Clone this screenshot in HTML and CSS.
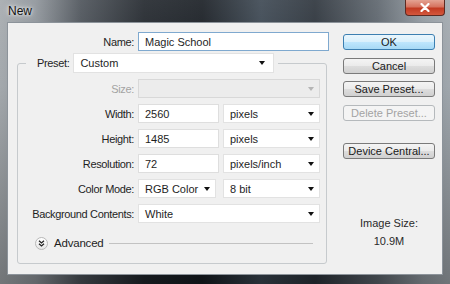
FILE: index.html
```html
<!DOCTYPE html>
<html lang="en">
<head>
    <meta charset="UTF-8">
    <title>New</title>
    <link rel="stylesheet" href="styles.css">
</head>
<body>
    <div class="window">
        <div class="titlebar">
            <span class="title">New</span>
            <span class="close">
                <svg width="10" height="9" viewBox="0 0 10 9"><path d="M1.5 1 L8.5 8 M8.5 1 L1.5 8" stroke="#fff" stroke-width="2.2" stroke-linecap="round"/></svg>
            </span>
        </div>

        <div class="client">
            <!-- Champs du document -->
            <div class="main">
                <div class="name-row">
                    <span class="label">Name:</span>
                    <div class="field focus">Magic School</div>
                </div>

                <fieldset class="group">
                    <legend class="preset">
                        <span class="label">Preset:</span>
                        <div class="select preset-select">Custom</div>
                    </legend>

                    <div class="rows">
                        <span class="label disabled">Size:</span>
                        <div class="select span2 disabled"></div>

                        <span class="label">Width:</span>
                        <div class="field">2560</div>
                        <div class="select">pixels</div>

                        <span class="label">Height:</span>
                        <div class="field">1485</div>
                        <div class="select">pixels</div>

                        <span class="label">Resolution:</span>
                        <div class="field">72</div>
                        <div class="select">pixels/inch</div>

                        <span class="label">Color Mode:</span>
                        <div class="select mode">RGB Color</div>
                        <div class="select">8 bit</div>

                        <span class="label">Background Contents:</span>
                        <div class="select span2">White</div>
                    </div>

                    <div class="advanced">
                        <span class="adv-icon">
                            <svg width="7" height="7" viewBox="0 0 7 7"><path d="M1 0.8 L3.5 3 L6 0.8 M1 3.8 L3.5 6 L6 3.8" fill="none" stroke="#222" stroke-width="1.3"/></svg>
                        </span>
                        <span class="adv-text">Advanced</span>
                        <span class="adv-line"></span>
                    </div>
                </fieldset>
            </div>

            <!-- Boutons -->
            <div class="actions">
                <button class="btn default">OK</button>
                <button class="btn">Cancel</button>
                <button class="btn">Save Preset...</button>
                <button class="btn" disabled>Delete Preset...</button>
                <button class="btn device">Device Central...</button>
                <div class="image-size">
                    <span>Image Size:</span>
                    <span>10.9M</span>
                </div>
            </div>
        </div>
    </div>
</body>
</html>
```

FILE: styles.css
```css
* {
    margin: 0;
    padding: 0;
    box-sizing: border-box;
}

body {
    width: 450px;
    height: 284px;
    overflow: hidden;
    font-family: "Liberation Sans", Arial, sans-serif;
    font-size: 11px;
    color: #1e1e1e;
}

.window {
    height: 284px;
    display: flex;
    flex-direction: column;
    background:
        linear-gradient(180deg, rgba(255, 255, 255, 0.1) 0%, rgba(0, 0, 0, 0) 30%, rgba(0, 0, 0, 0.3) 100%),
        linear-gradient(90deg, #a4a9ad 0%, #8c9298 8%, #4a5057 18%, #1f242a 32%, #161b21 45%, #3a4550 58%, #2a3139 70%, #5b636b 84%, #8f979e 94%, #a0a7ad 100%);
}

.titlebar {
    height: 22px;
    display: flex;
    align-items: flex-start;
    padding-left: 8px;
}

.title {
    margin-top: 4px;
    font-size: 12px;
    color: #111;
    text-shadow: 0 0 6px rgba(255, 255, 255, 0.9), 0 0 3px rgba(255, 255, 255, 0.9);
}

.close {
    margin-left: auto;
    margin-right: 5px;
    width: 40px;
    height: 16px;
    display: flex;
    align-items: center;
    justify-content: center;
    border: 1px solid #5d2a22;
    border-top: none;
    border-radius: 0 0 4px 4px;
    background: linear-gradient(180deg, #e4a393 0%, #d6735f 45%, #c23a22 55%, #d4583d 100%);
}

.client {
    flex: 1;
    margin: 0 7px 9px 7px;
    border: 1px solid #8c939a;
    background-color: #f0f0f0;
    display: flex;
}

.main {
    width: 327px;
}

.label {
    text-align: right;
    white-space: nowrap;
    letter-spacing: -0.35px;
}

.disabled {
    color: #a3a3a3;
}

.name-row {
    margin-top: 9px;
    display: flex;
    align-items: center;
}

.name-row .label {
    width: 126px;
    margin-right: 4px;
}

.field {
    height: 19px;
    padding: 0 6px;
    display: flex;
    align-items: center;
    background-color: #fff;
    border: 1px solid #dedede;
}

.name-row .field {
    width: 191px;
}

.field.focus {
    border-color: #7fa9cf;
}

.select {
    position: relative;
    height: 19px;
    padding: 0 6px;
    display: flex;
    align-items: center;
    background-color: #fff;
    border: 1px solid #e2e2e2;
}

.select::after {
    content: "";
    position: absolute;
    right: 5px;
    top: 7px;
    border-left: 3.5px solid transparent;
    border-right: 3.5px solid transparent;
    border-top: 4px solid #111;
}

.select.disabled {
    background-color: #ececec;
    border-color: #d8d8d8;
}

.select.disabled::after {
    border-top-color: #b5b5b5;
}

.group {
    margin: 2px 0 0 9px;
    width: 310px;
    min-width: 0;
    padding: 0 0 13px 0;
    border: 1px solid #c6cacd;
    border-radius: 3px;
}

.preset {
    margin-left: 8px;
    padding: 0 4px 0 11px;
    display: flex;
    align-items: center;
}

.preset .label {
    margin-right: 4px;
}

.preset-select {
    width: 201px;
    height: 20px;
}

.preset-select::after {
    right: 8px;
}

.rows {
    margin-top: 6px;
    display: grid;
    grid-template-columns: 116px 81px 97px;
    grid-auto-rows: 19px;
    column-gap: 4px;
    row-gap: 6px;
    align-items: center;
}

.span2 {
    grid-column: span 2;
}

.mode {
    width: 78px;
}

.advanced {
    margin-top: 13px;
    padding-left: 17px;
    padding-right: 13px;
    height: 14px;
    display: flex;
    align-items: center;
}

.adv-icon {
    width: 13px;
    height: 13px;
    display: flex;
    align-items: center;
    justify-content: center;
    border: 1px solid #b8b8b8;
    border-radius: 50%;
    background: linear-gradient(180deg, #ffffff, #e6e6e6);
}

.adv-text {
    margin-left: 6px;
    font-size: 11.5px;
    letter-spacing: -0.2px;
}

.adv-line {
    flex: 1;
    height: 1px;
    margin-left: 5px;
    background-color: #c2c2c2;
}

.actions {
    width: 92px;
    margin-left: 8px;
    padding-top: 11px;
    display: flex;
    flex-direction: column;
    gap: 7.5px;
}

.btn {
    height: 16px;
    font-family: "Liberation Sans", Arial, sans-serif;
    font-size: 11px;
    color: #1a1a1a;
    border: 1px solid #7a7a7a;
    border-radius: 3px;
    background: linear-gradient(180deg, #f4f4f4 0%, #ebebeb 48%, #dddddd 52%, #d0d0d0 100%);
}

.btn.default {
    border-color: #3c7fb1;
    background: linear-gradient(180deg, #eaf6fd 0%, #d9f0fc 48%, #bee6fd 52%, #a7d9f5 100%);
}

.btn:disabled {
    color: #a3a3a3;
    border-color: #b5b9bc;
    background: #f4f4f4;
}

.btn.device {
    margin-top: 15px;
}

.image-size {
    margin-top: 50px;
    display: flex;
    flex-direction: column;
    align-items: center;
    gap: 6px;
    color: #2a2a2a;
}
```
